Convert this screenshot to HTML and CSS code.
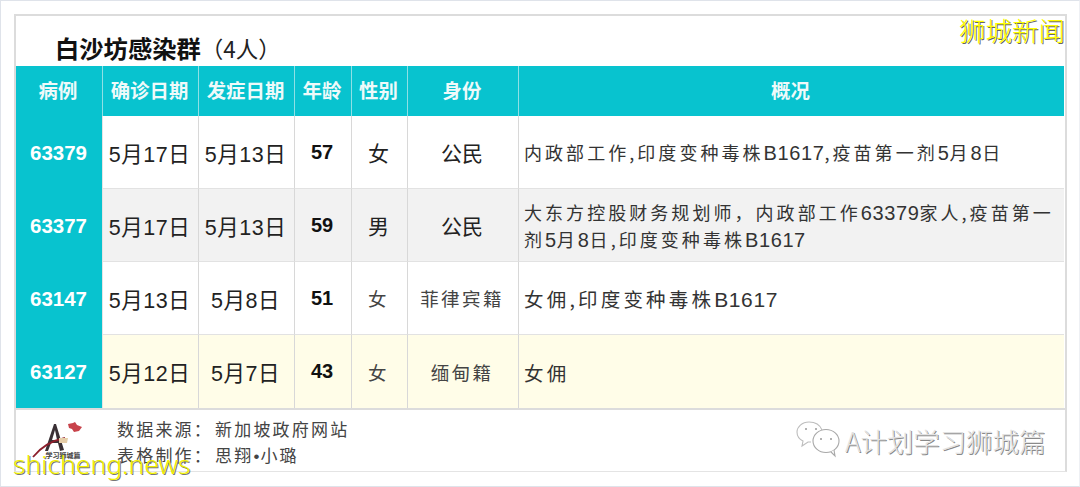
FILE: index.html
```html
<!DOCTYPE html>
<html lang="zh">
<head>
<meta charset="utf-8">
<title>白沙坊感染群</title>
<link rel="stylesheet" href="styles.css">
</head>
<body>
<div class="page">
  <main class="frame">
    <h1 class="title"><b>白沙坊感染群</b><span class="count">（4人）</span></h1>
    <div class="grid">
      <div class="hd">病例</div><div class="hd">确诊日期</div><div class="hd">发症日期</div><div class="hd">年龄</div><div class="hd">性别</div><div class="hd">身份</div><div class="hd">概况</div>

      <div class="id">63379</div><div class="c date">5月17日</div><div class="c date">5月13日</div><div class="c age">57</div><div class="c big">女</div><div class="c mid">公民</div><div class="c desc"><p>内政部工作,印度变种毒株<span class="num">B1617</span>,疫苗第一剂<span class="num">5</span>月<span class="num">8</span>日</p></div>

      <div class="id">63377</div><div class="c date alt">5月17日</div><div class="c date alt">5月13日</div><div class="c age alt">59</div><div class="c big alt">男</div><div class="c mid alt">公民</div><div class="c desc alt"><p>大东方控股财务规划师，内政部工作<span class="num">63379</span>家人,疫苗第一剂<span class="num">5</span>月<span class="num">8</span>日,印度变种毒株<span class="num">B1617</span></p></div>

      <div class="id">63147</div><div class="c date">5月13日</div><div class="c date">5月8日</div><div class="c age">51</div><div class="c soft">女</div><div class="c soft">菲律宾籍</div><div class="c desc wide"><p>女佣,印度变种毒株<span class="num">B1617</span></p></div>

      <div class="id">63127</div><div class="c date cream">5月12日</div><div class="c date cream">5月7日</div><div class="c age cream">43</div><div class="c soft cream">女</div><div class="c soft cream">缅甸籍</div><div class="c desc wide cream"><p>女佣</p></div>
    </div>
    <footer class="foot">
      <svg class="logo" viewBox="0 0 70 56" aria-hidden="true">
        <path d="M15 33L24 6h2l8 26-4 1-2-8h-7l-3 8z" fill="#3a3035"/>
        <path d="M22 22h5l-2-10z" fill="#fff"/>
        <path d="M3 39C11 29 20 23 35 20" fill="none" stroke="#8c1f2c" stroke-width="1.8"/>
        <path d="M29 20h9l-1 5h-8z" fill="#e6cda8"/>
        <path d="M38 6l5-1 2-1 2 3 5 2-3 4-5 1-2-3-3-1z" fill="#c8434b"/>
        <text x="33" y="40" class="logo-text" text-anchor="middle">学习狮城篇</text>
      </svg>
      <div class="source">
        <div>数据来源： 新加坡政府网站</div>
        <div>表格制作： 思翔<span class="dot">•</span>小璐</div>
      </div>
    </footer>
  </main>
  <div class="mark-cn">狮城新闻</div>
  <div class="mark-en">shicheng.news</div>
  <div class="wechat">
    <svg class="wx" viewBox="0 2 45 36" aria-hidden="true">
      <path d="M13 1C6 1 1 6 1 11c0 4 2 7 6 9l-1 5 6-4h3" fill="#fff" stroke="#bdbdbd" stroke-width="1.1"/>
      <path d="M13 1c6 0 11 3 13 8" fill="none" stroke="#bdbdbd" stroke-width="1.1"/>
      <ellipse cx="30" cy="20" rx="13" ry="11.5" fill="#fff" stroke="#a8a8a8" stroke-width="1.1"/>
      <path d="M35 31l4 4-1-6" fill="#fff" stroke="#a8a8a8" stroke-width="1.1"/>
      <circle cx="10" cy="8" r="1" fill="#999"/><circle cx="20" cy="8" r="1" fill="#999"/>
      <circle cx="25" cy="18" r="1" fill="#999"/><circle cx="35" cy="18" r="1" fill="#999"/>
    </svg>
    <span>A计划学习狮城篇</span>
  </div>
</div>
</body>
</html>
```
FILE: styles.css
```css
* { box-sizing: border-box; }
html, body { margin: 0; background: #fff; }
body { font-family: "Liberation Sans", "Noto Sans CJK SC", sans-serif; color: #222; }
.page {
  position: relative;
  width: 1080px;
  height: 487px;
  overflow: hidden;
  padding: 14px 13px 15px 14px;
  border: 1px solid #dfe3ea;
  border-right-color: #eef0f4;
}
.frame { display: flex; flex-direction: column; margin: -1px 0 0 -1px; height: 458px; border: 2px solid #dcdcdc; border-bottom: 1px solid #e4e4e4; width: 1053px; }
.title { margin: 0; height: 50px; padding: 16px 0 0 39px; font-size: 24px; line-height: 32px; font-weight: 400; color: #111; white-space: nowrap; }
.title b { font-family: "Noto Sans CJK SC", sans-serif; font-weight: 700; font-size: 24.3px; }
.count { font-family: "Noto Sans CJK SC", sans-serif; font-size: 22.5px; color: #222; }
.grid {
  display: grid;
  grid-template-columns: 87px 96px 96px 57px 56px 111px 545px;
  grid-template-rows: 50px 73px 73px 73px 73px;
  border-bottom: 2px solid #dcdcdc;
}
.hd, .id {
  display: flex; align-items: center; justify-content: center;
  background: #08c3cf; color: #fff; font-weight: 700;
  font-family: "Noto Sans CJK SC", sans-serif;
}
.hd { font-size: 19.4px; line-height: 48px; padding: 0 2px 2px 0; color: #eefafa; border-right: 1px solid #8fe0e5; }
.hd:nth-child(7) { border-right: 0; }
.id { font-family: "Liberation Sans", sans-serif; font-size: 20.5px; padding-right: 1px; border-right: 1px solid #e4e4e4; }
.c {
  display: flex; align-items: center; justify-content: center;
  padding-right: 2px;
  border-right: 1px solid #d8d8d8; border-bottom: 1px solid #e2e2e2;
  font-family: "Noto Sans CJK SC", sans-serif; font-size: 20px;
  background: #fff;
}
.desc { border-right: 0; justify-content: flex-start; padding: 1px 5px 0 5px; font-size: 18px; line-height: 27px; letter-spacing: 3.05px; color: #333; }
.desc p { margin: 0; }
.num { font-family: "Liberation Sans", sans-serif; font-size: 20px; letter-spacing: .6px; line-height: 20px; }
.wide { font-size: 19.5px; letter-spacing: 3.2px; }
.wide .num { font-size: 21px; }
.date { font-family: "Liberation Sans", "Noto Sans CJK SC", sans-serif; font-size: 21.5px; letter-spacing: .5px; color: #222; }
.age { font-family: "Liberation Sans", sans-serif; font-size: 20px; font-weight: 700; color: #111; }
.big { font-size: 21px; }
.mid { font-size: 21px; }
.soft { font-size: 18.5px; letter-spacing: 2.4px; color: #444; }
.alt { background: #f2f2f2; }
.cream { background: #fffde8; border-bottom: 0; }
.foot { flex: 1; display: flex; padding: 7px 0 0 14px; min-height: 0; }
.logo { width: 70px; height: 56px; flex: none; margin-top: 1px; overflow: visible; }
.logo-text { font-family: "Noto Sans CJK SC", sans-serif; font-size: 7px; font-weight: 700; fill: #444; }
.source { margin-left: 17px; font-family: "Noto Sans CJK SC", sans-serif; font-size: 17px; line-height: 26px; letter-spacing: 2.2px; word-spacing: -4px; color: #444; margin-top: -1px; }
.dot { font-family: "Liberation Sans", sans-serif; letter-spacing: 1px; }
.mark-cn {
  position: absolute; right: 14px; top: 14px;
  font-family: "Noto Sans CJK SC", sans-serif; font-weight: 300; font-size: 26.5px; line-height: 30px;
  color: #ffff00; text-shadow: 1px 1px 0 #666;
}
.mark-en {
  position: absolute; left: 12px; top: 447px;
  font-family: "Noto Sans", sans-serif; font-size: 26.5px; line-height: 32px; font-weight: 300;
  color: #f0f000; text-shadow: 1px 1px 0 #777;
}
.wechat { position: absolute; left: 795px; top: 422px; display: flex; align-items: center; gap: 4px; }
.wx { width: 45px; height: 36px; overflow: visible; }
.wechat span { font-family: "Noto Sans CJK SC", sans-serif; font-weight: 300; font-size: 26.5px; letter-spacing: -.1px; color: #e2e2e2; text-shadow: 1px 1px 0 #8a8a8a; line-height: 32px; white-space: nowrap; }
```
